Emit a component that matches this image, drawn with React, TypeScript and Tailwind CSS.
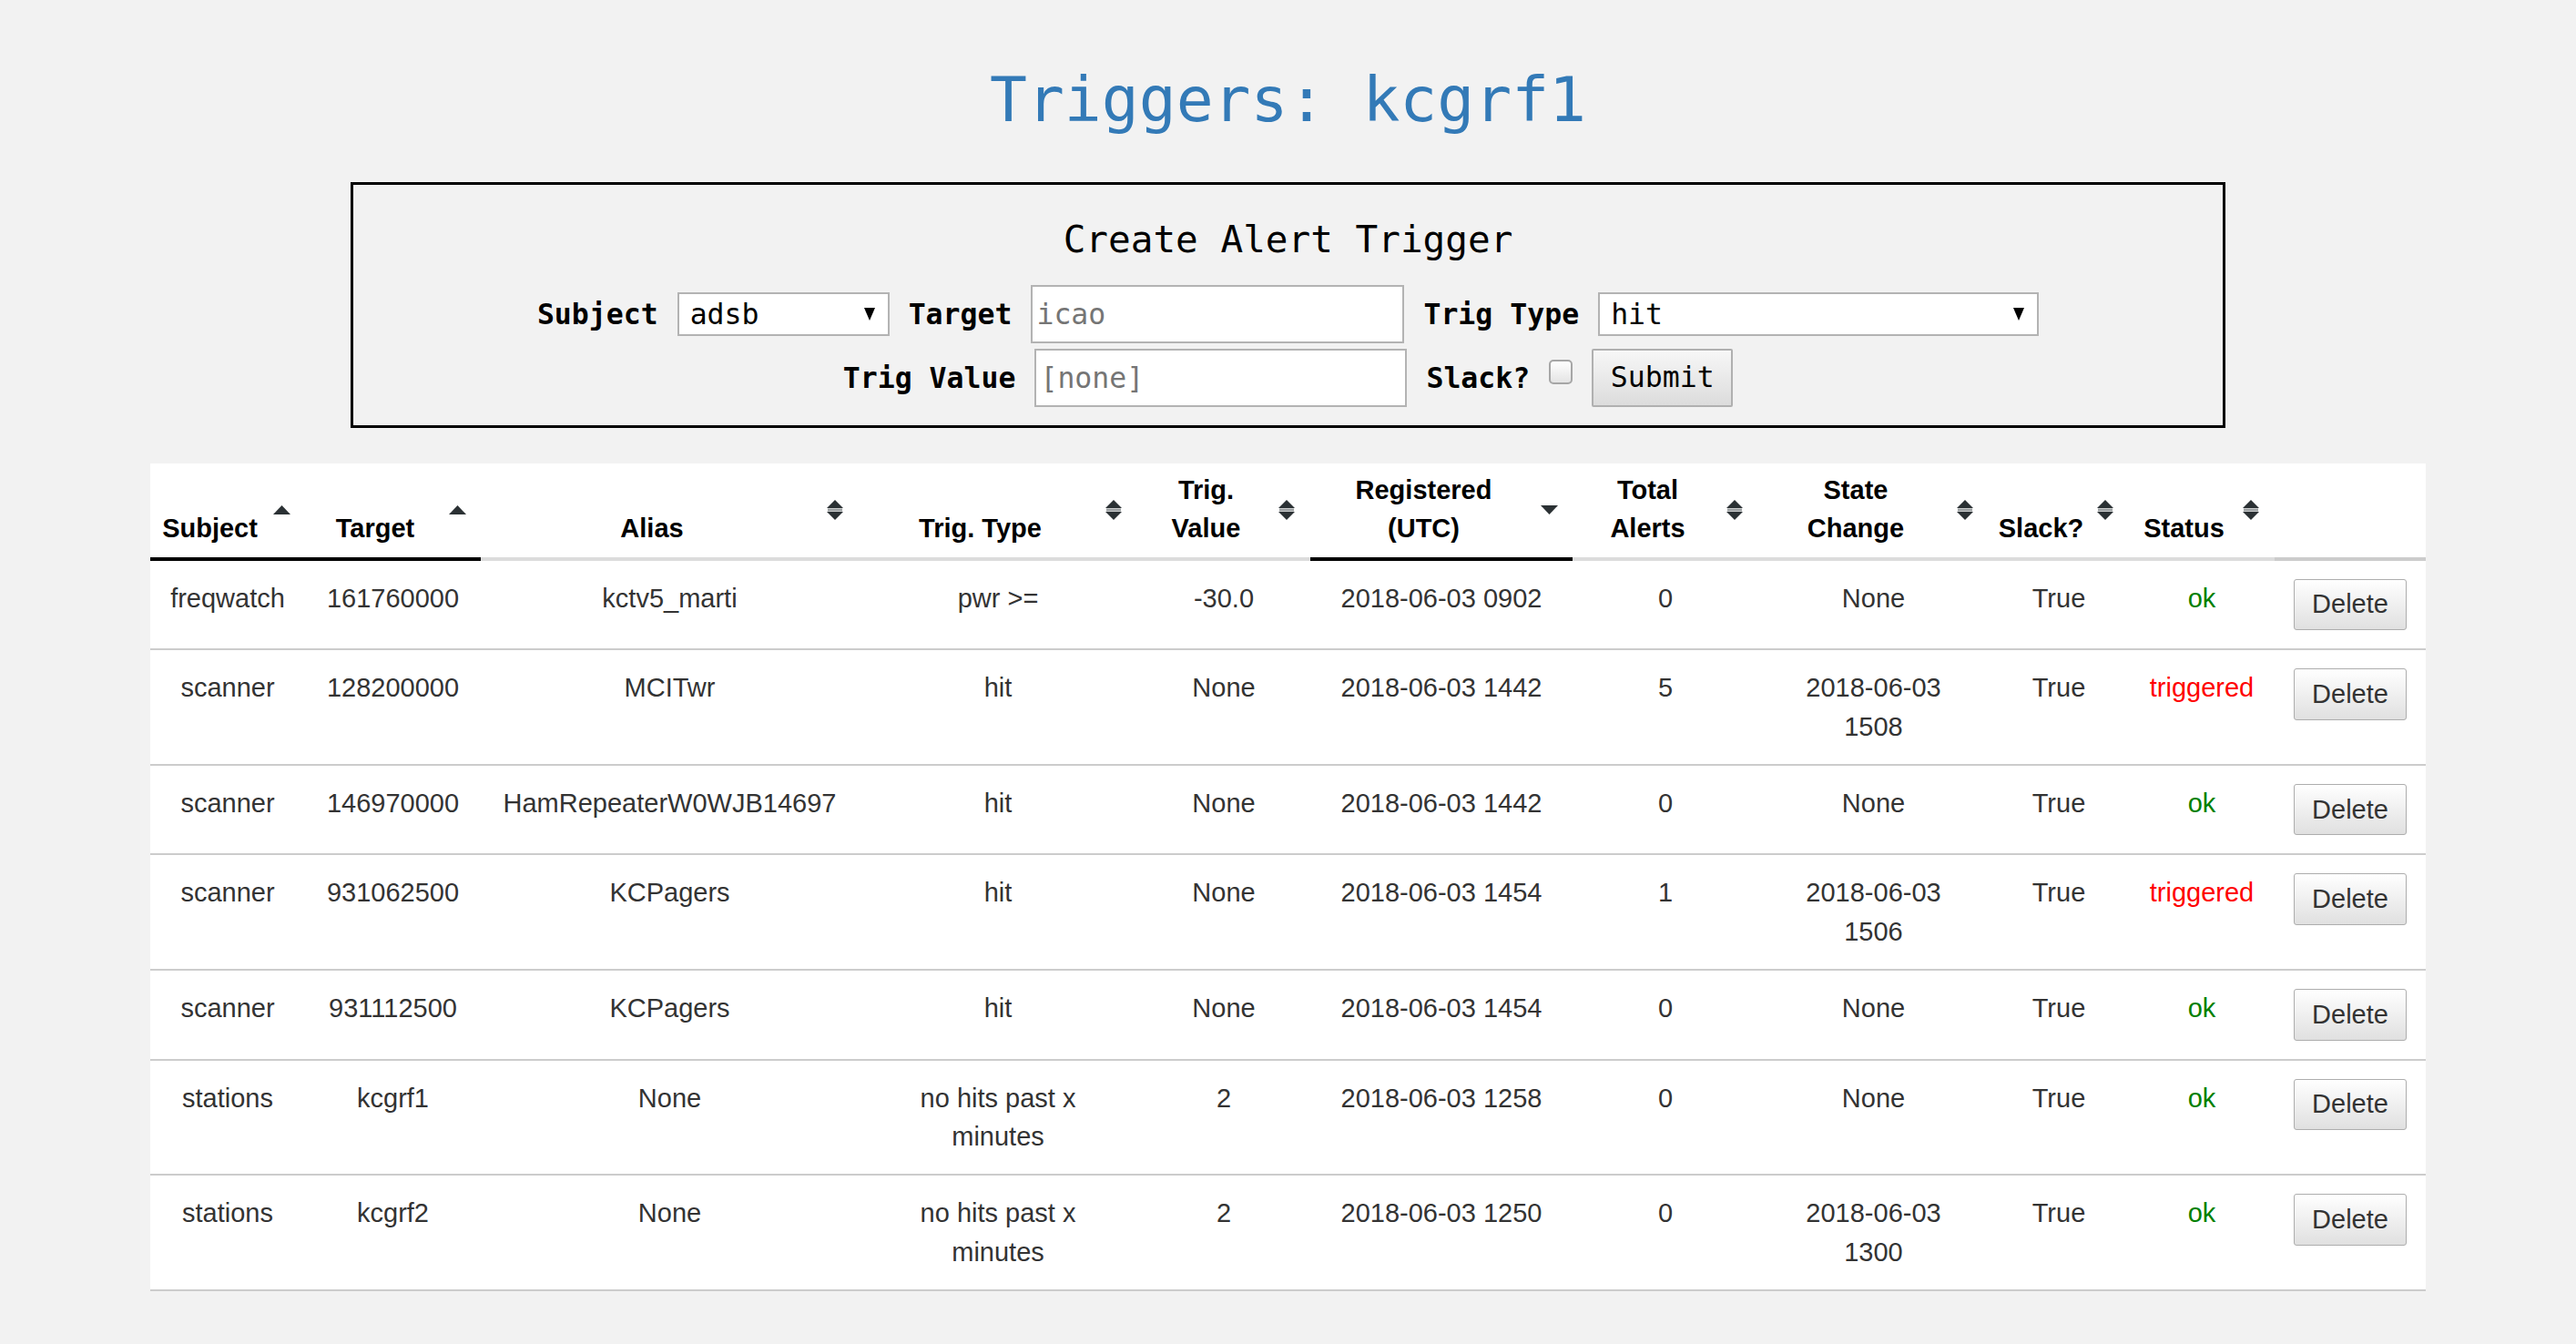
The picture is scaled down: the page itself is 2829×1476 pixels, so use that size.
import React from "react";

type SortDir = "asc" | "desc" | "both";

type Column = {
  lines: string[];
  width: string;
  sort: SortDir | null;
  border: string;
};

const columns: Column[] = [
  { lines: ["Subject"], width: "w-[170px]", sort: "asc", border: "border-black" },
  { lines: ["Target"], width: "w-[193px]", sort: "asc", border: "border-black" },
  { lines: ["Alias"], width: "w-[415px]", sort: "both", border: "border-[#dcdcdc]" },
  { lines: ["Trig. Type"], width: "w-[306px]", sort: "both", border: "border-[#dcdcdc]" },
  { lines: ["Trig.", "Value"], width: "w-[190px]", sort: "both", border: "border-[#dcdcdc]" },
  { lines: ["Registered", "(UTC)"], width: "w-[288px]", sort: "desc", border: "border-black" },
  { lines: ["Total", "Alerts"], width: "w-[204px]", sort: "both", border: "border-[#dcdcdc]" },
  { lines: ["State", "Change"], width: "w-[253px]", sort: "both", border: "border-[#dcdcdc]" },
  { lines: ["Slack?"], width: "w-[154px]", sort: "both", border: "border-[#dcdcdc]" },
  { lines: ["Status"], width: "w-[160px]", sort: "both", border: "border-[#dcdcdc]" },
  { lines: [], width: "w-[166px]", sort: null, border: "border-[#cccccc]" },
];

const rows = [
  ["freqwatch", "161760000", "kctv5_marti", "pwr >=", "-30.0", "2018-06-03 0902", "0", "None", "True", "ok"],
  ["scanner", "128200000", "MCITwr", "hit", "None", "2018-06-03 1442", "5", "2018-06-03 1508", "True", "triggered"],
  ["scanner", "146970000", "HamRepeaterW0WJB14697", "hit", "None", "2018-06-03 1442", "0", "None", "True", "ok"],
  ["scanner", "931062500", "KCPagers", "hit", "None", "2018-06-03 1454", "1", "2018-06-03 1506", "True", "triggered"],
  ["scanner", "931112500", "KCPagers", "hit", "None", "2018-06-03 1454", "0", "None", "True", "ok"],
  ["stations", "kcgrf1", "None", "no hits past x minutes", "2", "2018-06-03 1258", "0", "None", "True", "ok"],
  ["stations", "kcgrf2", "None", "no hits past x minutes", "2", "2018-06-03 1250", "0", "2018-06-03 1300", "True", "ok"],
];

function SortIcon({ dir }: { dir: SortDir }) {
  if (dir === "asc") {
    return (
      <svg width="19" height="10" viewBox="0 0 19 10" className="absolute right-[16px] top-1/2 -translate-y-1/2">
        <polygon points="9.5,0 19,10 0,10" fill="#2b3134" />
      </svg>
    );
  }
  if (dir === "desc") {
    return (
      <svg width="19" height="10" viewBox="0 0 19 10" className="absolute right-[16px] top-1/2 -translate-y-1/2">
        <polygon points="0,0 19,0 9.5,10" fill="#2b3134" />
      </svg>
    );
  }
  return (
    <svg width="18" height="22" viewBox="0 0 18 22" className="absolute right-[17px] top-1/2 -translate-y-1/2">
      <polygon points="9,0 18,9 0,9" fill="#2b3134" />
      <rect x="1" y="9.5" width="16" height="3" fill="#9a9ea0" />
      <polygon points="0,13 18,13 9,22" fill="#2b3134" />
    </svg>
  );
}

function SelectBox({ value, className }: { value: string; className: string }) {
  return (
    <div className={`relative h-[48px] ${className}`}>
      <select
        defaultValue={value}
        className="h-full w-full appearance-none rounded-none border-2 border-[#b3b3b3] bg-white pl-[12px] text-[31.5px] leading-[40px] text-black outline-none"
      >
        <option>{value}</option>
      </select>
      <svg
        width="12"
        height="14"
        viewBox="0 0 12 14"
        className="pointer-events-none absolute right-[16px] top-1/2 -translate-y-1/2"
      >
        <polygon points="0,0 12,0 6,14" fill="#000" />
      </svg>
    </div>
  );
}

export default function App() {
  return (
    <div className="min-h-screen bg-[#f2f2f2] pt-[72px] pb-[40px]">
      <h1 className="text-center font-['DejaVu_Sans_Mono',monospace] text-[68px] leading-[75px] font-normal text-[#337ab7]">
        Triggers: kcgrf1
      </h1>

      <div className="mx-auto mt-[53px] w-[2059px] border-[3px] border-black pt-[38px] pb-[20px] font-['DejaVu_Sans_Mono',monospace] text-black">
        <h3 className="mb-[27px] text-center text-[41px] leading-[45px] font-normal">Create Alert Trigger</h3>

        <div className="flex h-[64px] items-center justify-center gap-[21px]">
          <label className="text-[31.5px] leading-[36px] font-bold">Subject</label>
          <SelectBox value="adsb" className="w-[233px]" />
          <label className="text-[31.5px] leading-[36px] font-bold">Target</label>
          <input
            placeholder="icao"
            className="h-[64px] w-[410px] rounded-none border-2 border-[#b3b3b3] bg-white px-[4px] text-[31.5px] text-black outline-none placeholder:text-[#757575]"
          />
          <label className="text-[31.5px] leading-[36px] font-bold">Trig Type</label>
          <SelectBox value="hit" className="w-[484px]" />
        </div>

        <div className="mt-[6px] flex h-[64px] items-center justify-center gap-[21px]">
          <label className="text-[31.5px] leading-[36px] font-bold">Trig Value</label>
          <input
            placeholder="[none]"
            className="h-[64px] w-[409px] rounded-none border-2 border-[#b3b3b3] bg-white px-[4px] text-[31.5px] text-black outline-none placeholder:text-[#757575]"
          />
          <label className="text-[31.5px] leading-[36px] font-bold">Slack?</label>
          <input
            type="checkbox"
            className="mb-[13px] h-[27px] w-[26px] appearance-none rounded-[5px] border-2 border-[#a6a6a6] bg-gradient-to-b from-white to-[#e4e4e4]"
          />
          <button
            type="button"
            className="h-[64px] w-[155px] rounded-[2px] border-2 border-[#b0b0b0] bg-gradient-to-b from-[#f7f7f7] to-[#dcdcdc] text-[31.5px] text-black"
          >
            Submit
          </button>
        </div>
      </div>

      <table className="mx-auto mt-[39px] w-[2499px] table-fixed bg-white font-['Liberation_Sans',Arial,sans-serif] text-[29px] leading-[42.4px] text-[#333]">
        <colgroup>
          {columns.map((c, i) => (
            <col key={i} className={c.width} />
          ))}
        </colgroup>
        <thead>
          <tr>
            {columns.map((c, i) => (
              <th
                key={i}
                className={`relative border-b-4 ${c.border} pt-[8px] pb-[10px] pl-[10px] pr-[49px] text-center align-bottom font-bold text-black`}
              >
                {c.lines.map((l, j) => (
                  <React.Fragment key={j}>
                    {j > 0 && <br />}
                    {l}
                  </React.Fragment>
                ))}
                {c.sort && <SortIcon dir={c.sort} />}
              </th>
            ))}
          </tr>
        </thead>
        <tbody>
          {rows.map((r, i) => (
            <tr key={i}>
              {r.map((cell, j) => (
                <td
                  key={j}
                  className={`border-b-2 border-[#cccccc] px-[17px] py-[20px] text-center align-top ${
                    j === 9 ? (cell === "ok" ? "text-[#008000]" : "text-[#ff0000]") : ""
                  }`}
                >
                  {cell}
                </td>
              ))}
              <td className="border-b-2 border-[#cccccc] px-[10px] py-[20px] text-center align-top">
                <button
                  type="button"
                  className="rounded-[3px] border border-[#adadad] bg-gradient-to-b from-white to-[#e0e0e0] px-[19px] py-[6.5px] align-top text-[29px] leading-[41.4px] text-[#333]"
                >
                  Delete
                </button>
              </td>
            </tr>
          ))}
        </tbody>
      </table>
    </div>
  );
}
